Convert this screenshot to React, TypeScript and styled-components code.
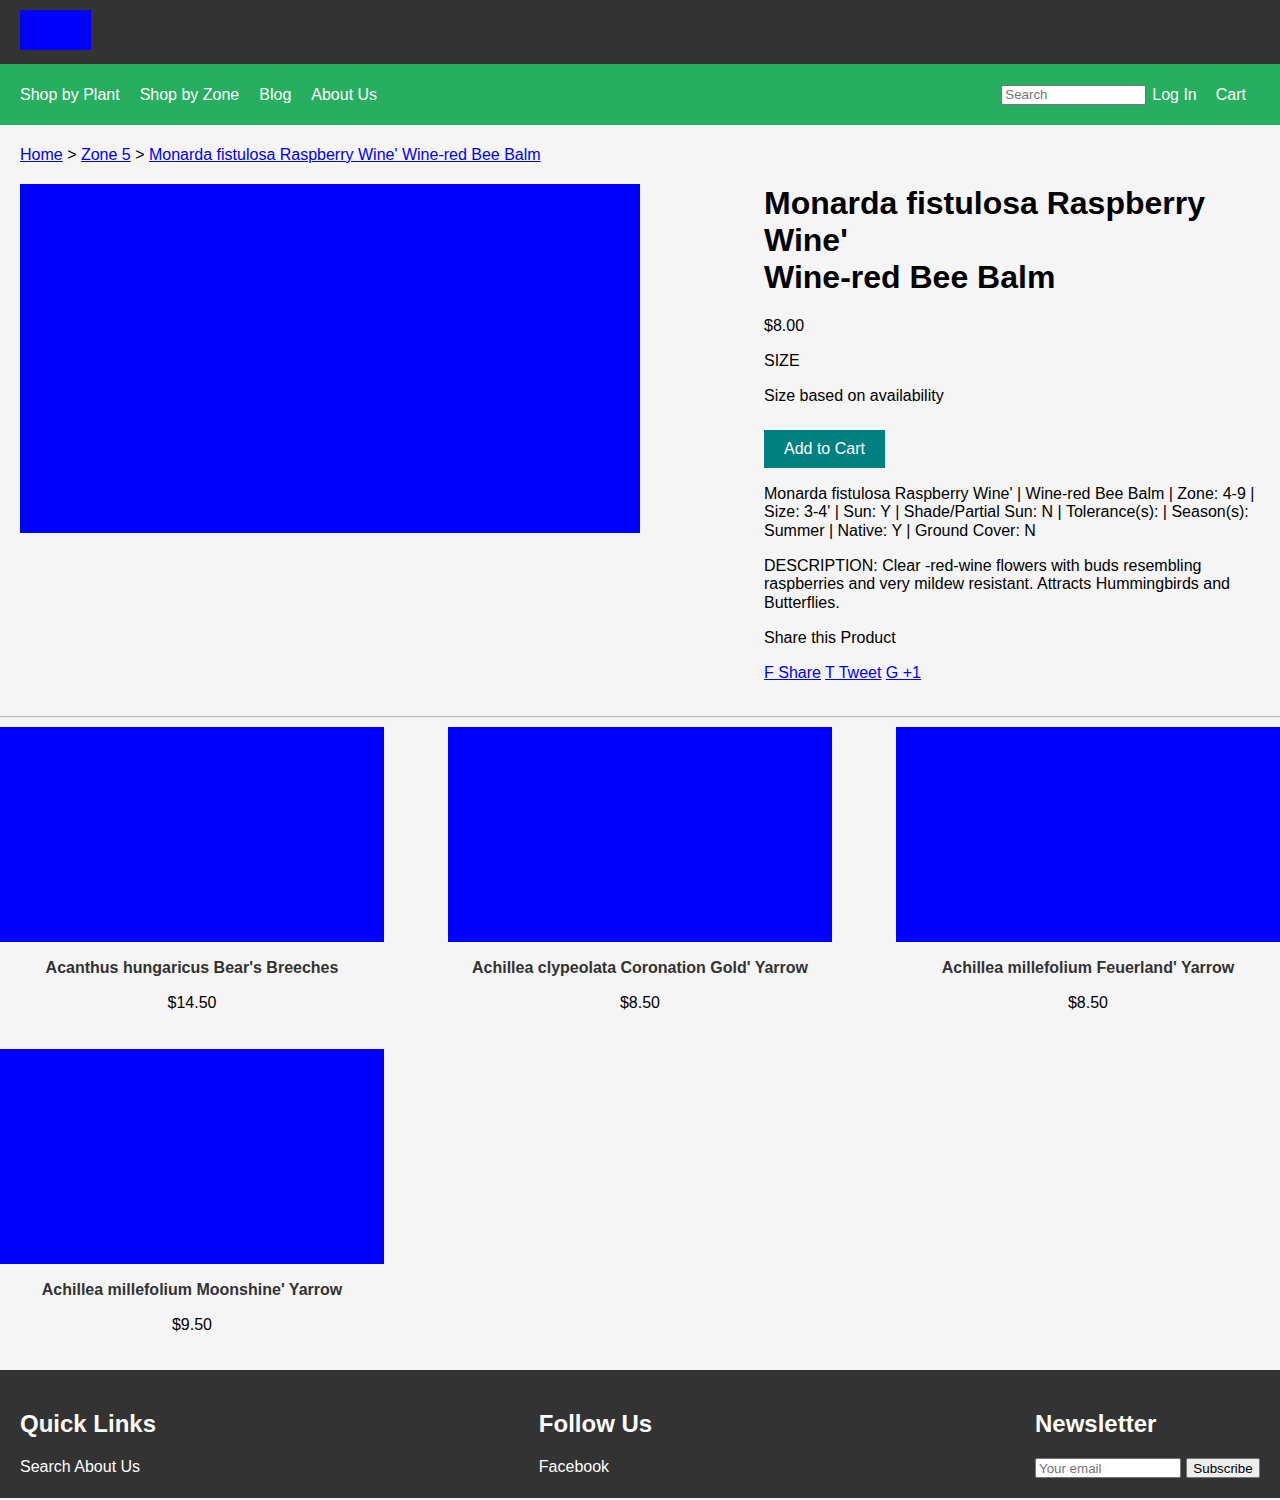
import React from "react";
import styled, { createGlobalStyle } from "styled-components";

const GlobalStyle = createGlobalStyle`
  html, body { margin: 0; padding: 0; }
  body {
    font-family: "Liberation Sans", Arial, sans-serif;
    font-size: 16px;
    background: #f5f5f5;
    color: #000;
  }
`;

const TopBar = styled.header`
  height: 64px;
  box-sizing: border-box;
  padding: 10px 20px;
  background: #333333;
`;

const Logo = styled.div`
  width: 71px;
  height: 40px;
  background: #0000ff;
`;

const NavBar = styled.nav`
  display: flex;
  justify-content: space-between;
  align-items: center;
  padding: 20px;
  height: 61px;
  box-sizing: border-box;
  background: #27ae60;
`;

const NavGroup = styled.div`
  display: flex;
  align-items: center;
  gap: 20px;
`;

const NavLink = styled.a<{ $ml?: number }>`
  color: #ffffff;
  text-decoration: none;
  font-size: 16px;
  line-height: 18px;
  margin-left: ${(p) => p.$ml ?? 0}px;
`;

const RightGroup = styled.div`
  display: flex;
  align-items: center;
  margin-right: 14px;
`;

const TextInput = styled.input<{ $w: number }>`
  width: ${(p) => p.$w}px;
  height: 20px;
  box-sizing: border-box;
  border: 1px solid #767676;
  border-radius: 2px;
  padding: 1px 3px;
  background: #fff;
  font-family: "Liberation Sans", Arial, sans-serif;
  font-size: 13.33px;
  &::placeholder { color: #757575; }
`;

const Main = styled.main`
  padding: 20px 20px 17px;
`;

const Breadcrumb = styled.div`
  margin: 0 0 20px;
  line-height: 19px;
`;

const Link = styled.a`
  color: #0000ee;
  text-decoration: underline;
`;

const ProductSection = styled.section`
  display: flex;
  justify-content: space-between;
  align-items: flex-start;
`;

const ImageBox = styled.div<{ $h: number }>`
  background: #0000ff;
  height: ${(p) => p.$h}px;
`;

const MainImage = styled(ImageBox)`
  width: 50%;
`;

const Details = styled.div`
  width: 40%;
`;

const Title = styled.h1`
  font-size: 32px;
  line-height: 37px;
  font-weight: bold;
  margin: 0 0 21px;
  padding-top: 1px;
`;

const Para = styled.p`
  margin: 16.6px 0;
  line-height: 18.4px;
`;

const ButtonRow = styled.div`
  margin: 25px 0 16px;
`;

const AddButton = styled.button`
  background: #008080;
  color: #fff;
  border: none;
  padding: 10px 20px;
  height: 38px;
  font-family: "Liberation Sans", Arial, sans-serif;
  font-size: 16px;
  cursor: pointer;
`;

const Divider = styled.div`
  border-top: 1px solid #bdbdbd;
  border-bottom: 1px solid #ececec;
  margin: 0 0 9px;
`;

const Grid = styled.section`
  display: grid;
  grid-template-columns: repeat(3, 384px);
  column-gap: 64px;
  row-gap: 20px;
  padding-bottom: 20px;
`;

const Card = styled.div`
  text-align: center;
`;

const CardTitle = styled.h3`
  font-size: 16px;
  line-height: 18.4px;
  font-weight: bold;
  color: #333333;
  margin: 17.5px 0 16.6px;
`;

const CardPrice = styled.p`
  margin: 16.6px 0 16px;
  line-height: 18.4px;
`;

const Footer = styled.footer`
  background: #333333;
  color: #fff;
  padding: 20px;
  display: flex;
  justify-content: space-between;
  align-items: flex-start;
`;

const FooterCol = styled.div``;

const FooterHeading = styled.h2`
  font-size: 24px;
  line-height: 27.6px;
  margin: 20px 0;
`;

const FooterLink = styled.a`
  color: #fff;
  text-decoration: none;
  line-height: 18.4px;
`;

const NewsForm = styled.div`
  display: flex;
  align-items: center;
  gap: 5px;
`;

const SubscribeButton = styled.button`
  width: 74px;
  height: 20px;
  box-sizing: border-box;
  padding: 1px 6px;
  border: 1px solid #767676;
  border-radius: 2px;
  background: #efefef;
  color: #000;
  font-family: "Liberation Sans", Arial, sans-serif;
  font-size: 13.33px;
`;

const products = [
  { name: "Acanthus hungaricus Bear's Breeches", price: "$14.50" },
  { name: "Achillea clypeolata Coronation Gold' Yarrow", price: "$8.50" },
  { name: "Achillea millefolium Feuerland' Yarrow", price: "$8.50" },
  { name: "Achillea millefolium Moonshine' Yarrow", price: "$9.50" },
];

export default function App() {
  return (
    <>
      <GlobalStyle />
      <TopBar>
        <Logo />
      </TopBar>
      <NavBar>
        <NavGroup>
          <NavLink href="#">Shop by Plant</NavLink>
          <NavLink href="#">Shop by Zone</NavLink>
          <NavLink href="#">Blog</NavLink>
          <NavLink href="#">About Us</NavLink>
        </NavGroup>
        <RightGroup>
          <TextInput $w={145} placeholder="Search" />
          <NavLink href="#" $ml={6}>Log In</NavLink>
          <NavLink href="#" $ml={19}>Cart</NavLink>
        </RightGroup>
      </NavBar>
      <Main>
        <Breadcrumb>
          <Link href="#">Home</Link> &gt; <Link href="#">Zone 5</Link> &gt;{" "}
          <Link href="#">Monarda fistulosa Raspberry Wine' Wine-red Bee Balm</Link>
        </Breadcrumb>
        <ProductSection>
          <MainImage $h={349} />
          <Details>
            <Title>
              Monarda fistulosa Raspberry Wine'
              <br />
              Wine-red Bee Balm
            </Title>
            <Para>$8.00</Para>
            <Para>SIZE</Para>
            <Para>Size based on availability</Para>
            <ButtonRow>
              <AddButton>Add to Cart</AddButton>
            </ButtonRow>
            <Para>
              Monarda fistulosa Raspberry Wine' | Wine-red Bee Balm | Zone: 4-9 | Size: 3-4' | Sun: Y |
              Shade/Partial Sun: N | Tolerance(s): | Season(s): Summer | Native: Y | Ground Cover: N
            </Para>
            <Para>
              DESCRIPTION: Clear -red-wine flowers with buds resembling raspberries and very mildew
              resistant. Attracts Hummingbirds and Butterflies.
            </Para>
            <Para>Share this Product</Para>
            <Para>
              <Link href="#">F Share</Link> <Link href="#">T Tweet</Link> <Link href="#">G +1</Link>
            </Para>
          </Details>
        </ProductSection>
      </Main>
      <Divider />
      <Grid>
        {products.map((p) => (
          <Card key={p.name}>
            <ImageBox $h={215} />
            <CardTitle>{p.name}</CardTitle>
            <CardPrice>{p.price}</CardPrice>
          </Card>
        ))}
      </Grid>
      <Footer>
        <FooterCol>
          <FooterHeading>Quick Links</FooterHeading>
          <FooterLink href="#">Search</FooterLink> <FooterLink href="#">About Us</FooterLink>
        </FooterCol>
        <FooterCol>
          <FooterHeading>Follow Us</FooterHeading>
          <FooterLink href="#">Facebook</FooterLink>
        </FooterCol>
        <FooterCol>
          <FooterHeading>Newsletter</FooterHeading>
          <NewsForm>
            <TextInput $w={146} placeholder="Your email" />
            <SubscribeButton>Subscribe</SubscribeButton>
          </NewsForm>
        </FooterCol>
      </Footer>
    </>
  );
}
